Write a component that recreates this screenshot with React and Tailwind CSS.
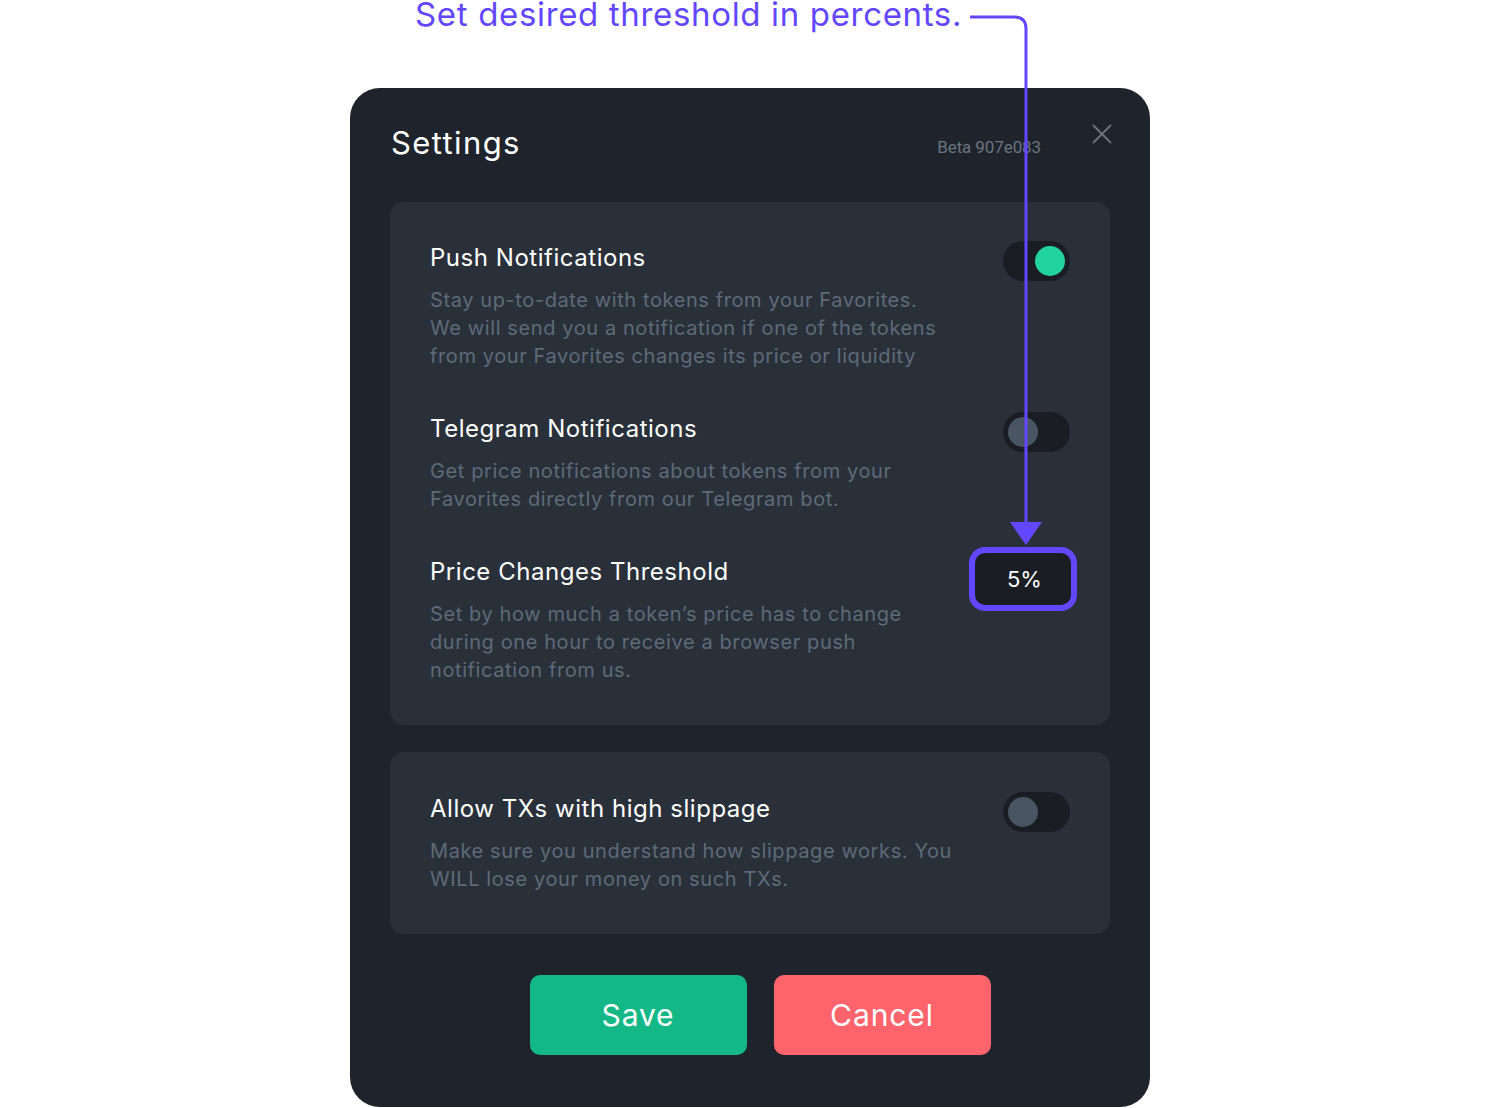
import { X } from 'lucide-react';

const font = { fontFamily: 'Inter, "Open Sans", sans-serif' };

function Toggle({ on }) {
  return (
    <div className="flex h-[40px] w-[67px] shrink-0 items-center rounded-full bg-[#1a1e24] px-[5px]">
      <div
        className={
          on
            ? 'ml-auto h-[30px] w-[30px] rounded-full bg-[#22d39f]'
            : 'h-[30px] w-[30px] rounded-full bg-[#4a5563]'
        }
      />
    </div>
  );
}

function Row({ title, lines, control }) {
  return (
    <div className="flex justify-between">
      <div>
        <div className="text-[24px] leading-[34px] tracking-[0.022em] text-white">{title}</div>
        <div className="mt-[11px] text-[20px] leading-[28px] tracking-[0.03em] text-[#5f6a78]">
          {lines.map((line) => (
            <div key={line} className="whitespace-nowrap">
              {line}
            </div>
          ))}
        </div>
      </div>
      {control}
    </div>
  );
}

export default function App() {
  return (
    <div className="relative h-[1108px] w-full overflow-hidden bg-white" style={font}>
      <div className="mx-auto mt-[88px] flex h-[1019px] w-[800px] flex-col rounded-[30px] bg-[#1f232b] px-[40px]">
        <div className="flex h-[114px] items-center justify-between pl-px">
          <div className="mt-[-4px] text-[31px] tracking-[0.045em] text-white">Settings</div>
          <div className="flex items-center">
            <span
              className="mt-[5px] text-[17px] tracking-[-0.1px] text-[#6b7380]"
              style={{ fontFamily: 'Roboto, sans-serif' }}
            >
              Beta 907e083
            </span>
            <X className="ml-[44px] mr-[-9px] mt-[-23px]" size={34} strokeWidth={1.3} color="#6b7380" />
          </div>
        </div>

        <div className="flex flex-col gap-[42px] rounded-[14px] bg-[#2a303a] px-[40px] pb-[41px] pt-[39px]">
          <Row
            title="Push Notifications"
            control={<Toggle on />}
            lines={[
              'Stay up-to-date with tokens from your Favorites.',
              'We will send you a notification if one of the tokens',
              'from your Favorites changes its price or liquidity',
            ]}
          />
          <Row
            title="Telegram Notifications"
            control={<Toggle />}
            lines={['Get price notifications about tokens from your', 'Favorites directly from our Telegram bot.']}
          />
          <Row
            title="Price Changes Threshold"
            control={
              <div className="mr-[-7px] mt-[-8px] h-[64px] w-[108px] shrink-0 rounded-[16px] border-[6px] border-[#6347ff] bg-[#1a1e24] pl-[3px] text-center text-[22px] leading-[52px] text-white">
                5%
              </div>
            }
            lines={[
              'Set by how much a token’s price has to change',
              'during one hour to receive a browser push',
              'notification from us.',
            ]}
          />
        </div>

        <div className="mt-[27px] rounded-[14px] bg-[#2a303a] px-[40px] pb-[41px] pt-[40px]">
          <Row
            title="Allow TXs with high slippage"
            control={<Toggle />}
            lines={['Make sure you understand how slippage works. You', 'WILL lose your money on such TXs.']}
          />
        </div>

        <div className="mt-[41px] flex justify-center gap-[27px] pl-[20px]">
          <button className="h-[80px] w-[217px] rounded-[10px] bg-[#14b886] text-[30px] tracking-[0.03em] text-white">
            Save
          </button>
          <button className="h-[80px] w-[217px] rounded-[10px] bg-[#ff646c] text-[30px] tracking-[0.03em] text-white">
            Cancel
          </button>
        </div>
      </div>

      <div className="absolute left-[415px] top-[-10px] whitespace-nowrap text-[33px] leading-[48px] tracking-[0.02em] text-[#6347ff]">
        Set desired threshold in percents.
      </div>
      <svg className="absolute left-0 top-0" width="1500" height="560" viewBox="0 0 1500 560">
        <path d="M970 17 H1014 Q1026 17 1026 29 V524" fill="none" stroke="#6347ff" strokeWidth="3" />
        <path d="M1010 522 L1042 522 L1026 545 Z" fill="#6347ff" />
      </svg>
    </div>
  );
}
